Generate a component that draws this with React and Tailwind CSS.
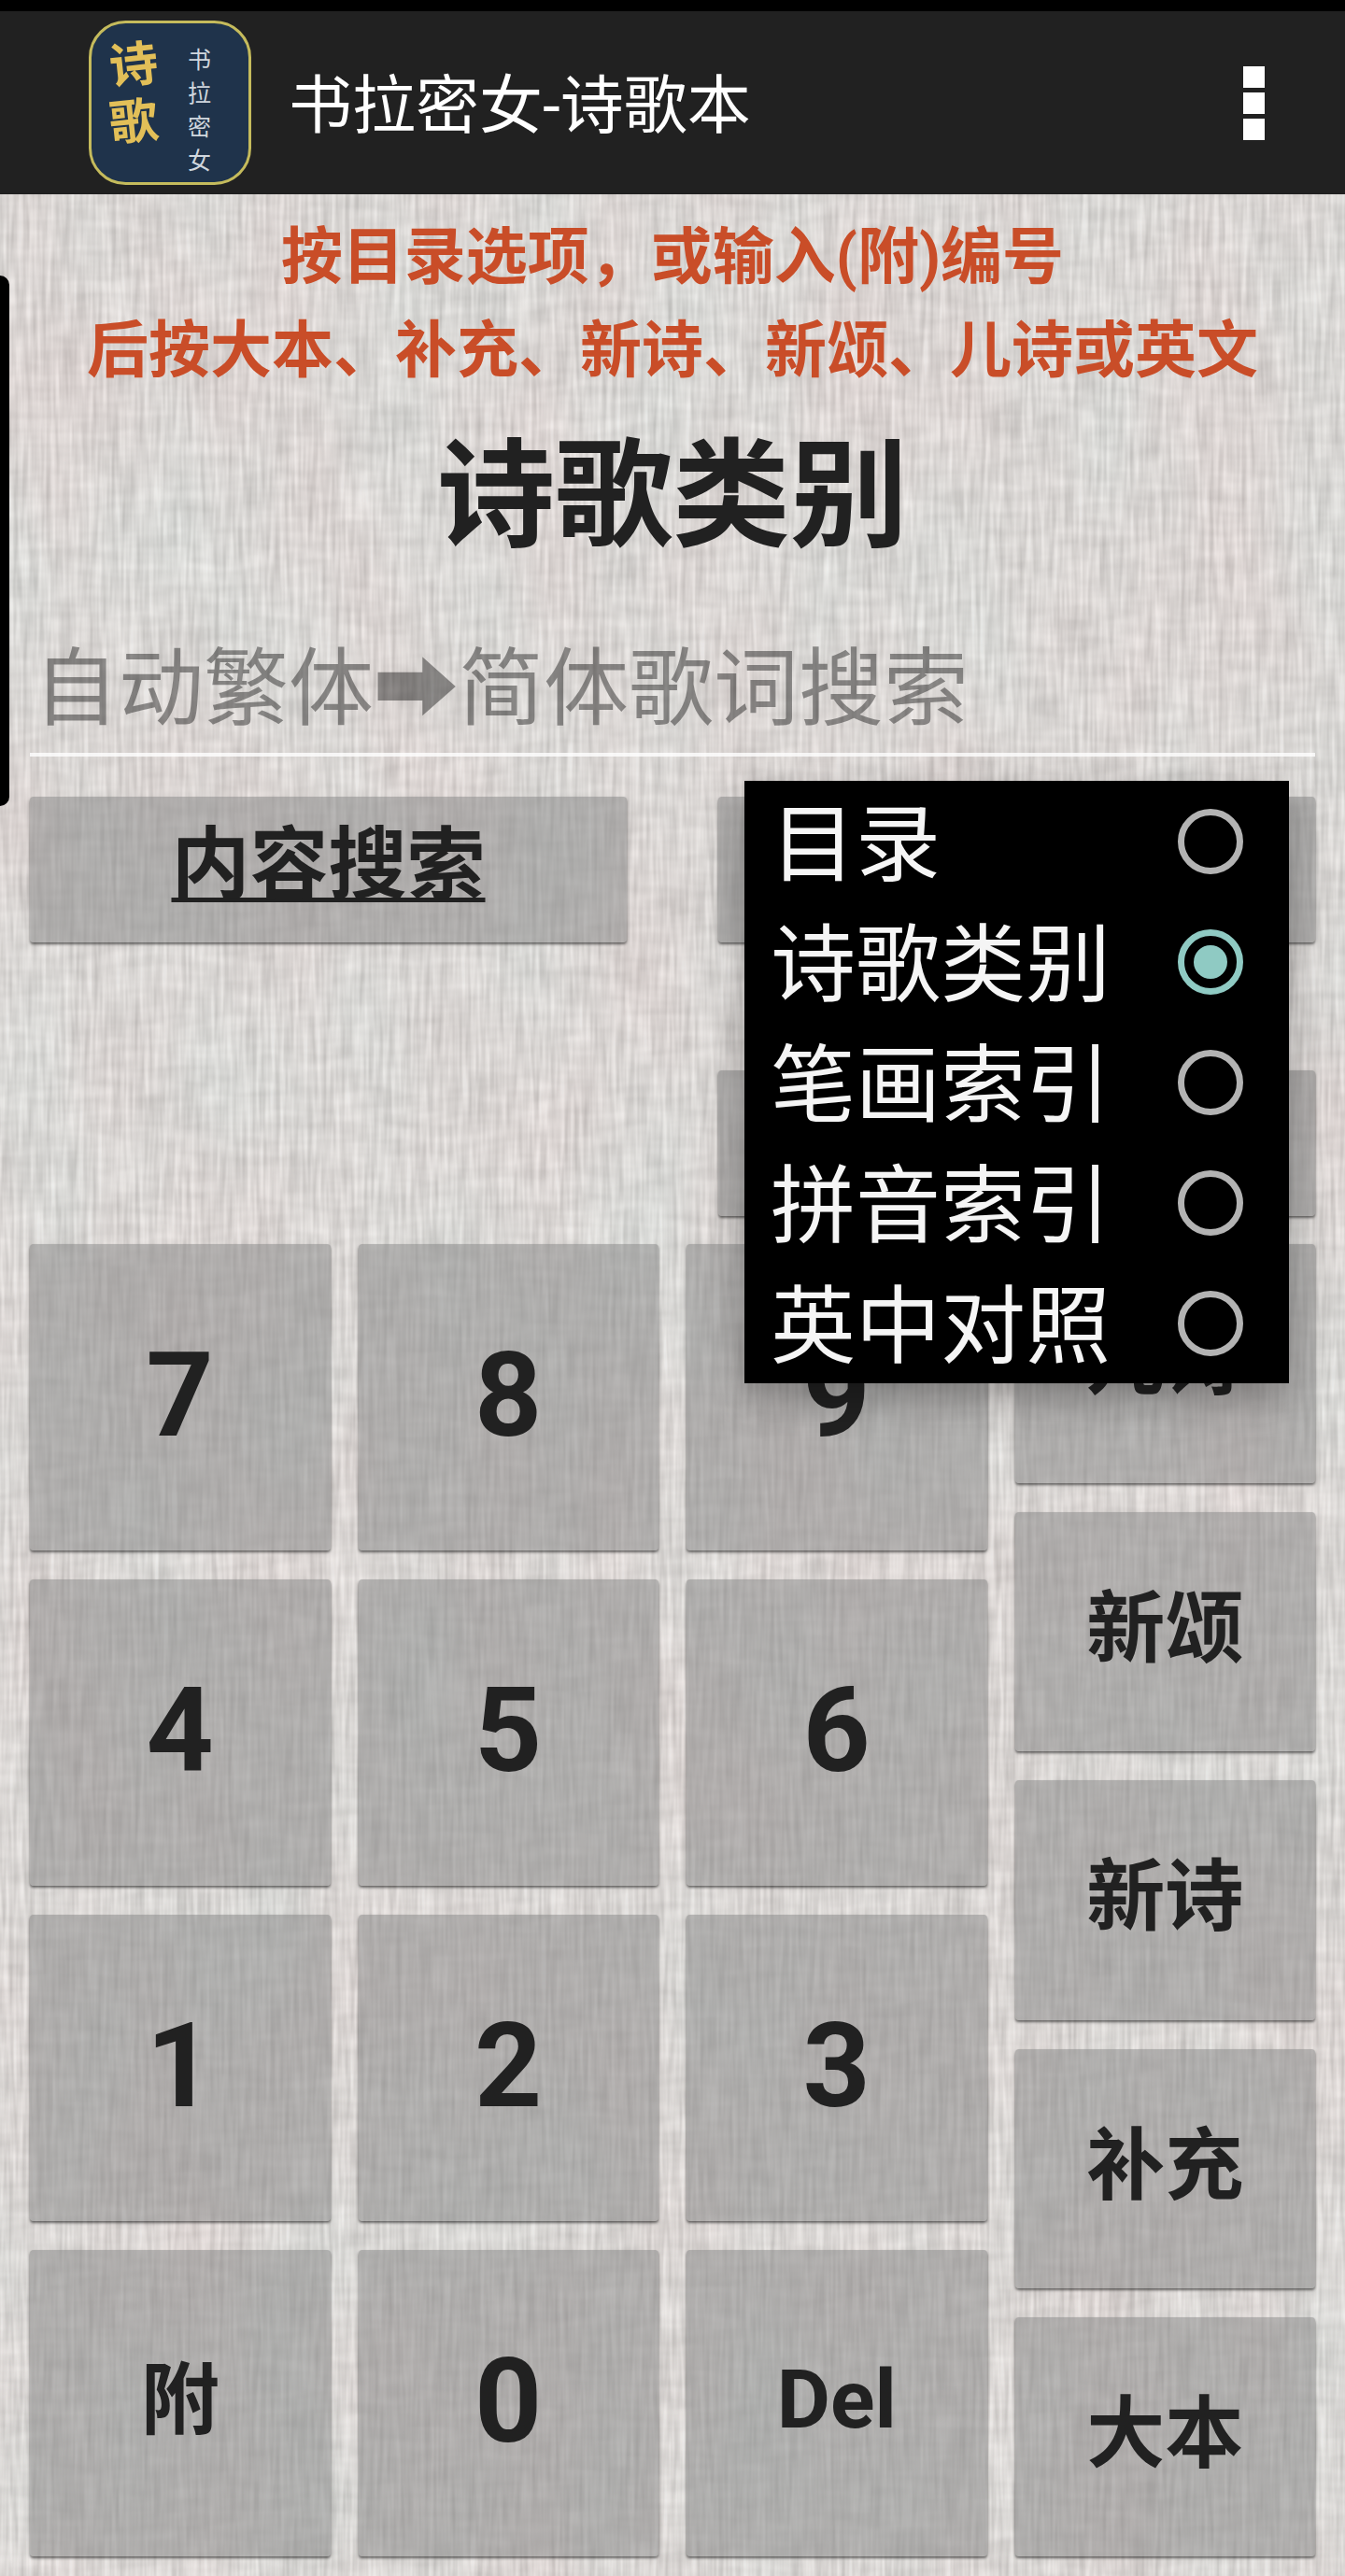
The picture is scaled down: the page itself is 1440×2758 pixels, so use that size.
import { useState } from 'react';

const CJK = "font-['Roboto','Noto_Sans_CJK_SC',sans-serif]";

const MENU = ['目录', '诗歌类别', '笔画索引', '拼音索引', '英中对照'];

const KEYS = [
  { label: '7', size: 'digit' },
  { label: '8', size: 'digit' },
  { label: '9', size: 'digit' },
  { label: '4', size: 'digit' },
  { label: '5', size: 'digit' },
  { label: '6', size: 'digit' },
  { label: '1', size: 'digit' },
  { label: '2', size: 'digit' },
  { label: '3', size: 'digit' },
  { label: '附', size: 'word' },
  { label: '0', size: 'digit' },
  { label: 'Del', size: 'latin' },
];

const BOOKS = ['儿诗', '新颂', '新诗', '补充', '大本'];

const SIZES = {
  digit: 'text-[126px] font-bold pb-1',
  word: 'text-[84px] font-bold pb-1',
  latin: 'text-[88px] font-bold pb-2',
};

function Linen() {
  return (
    <svg aria-hidden="true" className="absolute inset-0 h-full w-full">
      <filter id="linen" x="0" y="0" width="100%" height="100%" colorInterpolationFilters="sRGB">
        <feTurbulence type="fractalNoise" baseFrequency="0.2 0.014" numOctaves="2" seed="4" result="warp" />
        <feColorMatrix
          in="warp"
          values="0.6 0 0 0 0.55  0.6 0 0 0 0.537  0.6 0 0 0 0.528  0 0 0 0 1"
          result="warpTone"
        />
        <feTurbulence type="fractalNoise" baseFrequency="0.02 0.08" numOctaves="2" seed="9" result="weft" />
        <feColorMatrix
          in="weft"
          values="0.26 0 0 0 0.72  0.26 0 0 0 0.707  0.26 0 0 0 0.698  0 0 0 0 1"
          result="weftTone"
        />
        <feTurbulence type="fractalNoise" baseFrequency="0.008 0.004" numOctaves="2" seed="2" result="tint" />
        <feColorMatrix
          in="tint"
          values="0.06 0 0 0 0.83  -0.1 0 0 0 0.895  -0.09 0 0 0 0.88  0 0 0 0 1"
          result="tintTone"
        />
        <feComposite in="warpTone" in2="weftTone" operator="arithmetic" k2="0.5" k3="0.5" result="cloth" />
        <feComposite in="cloth" in2="tintTone" operator="arithmetic" k2="0.7" k3="0.3" />
      </filter>
      <rect width="100%" height="100%" filter="url(#linen)" />
    </svg>
  );
}

function Logo() {
  return (
    <svg viewBox="0 0 174 176" className="h-[176px] w-[174px] shrink-0" role="img" aria-label="诗歌 书拉密女">
      <rect x="1.5" y="1.5" width="171" height="173" rx="38" fill="#1f334b" stroke="#c5bb5c" strokeWidth="3" />
      <g fill="#e2bf58" fontFamily="'Noto Sans CJK SC', sans-serif" fontSize="52" fontWeight="700">
        <text x="22" y="66" transform="rotate(-6 48 46)">诗</text>
        <text x="22" y="127" transform="rotate(-6 48 107)">歌</text>
      </g>
      <g fill="#d0d7de" fontFamily="'Noto Sans CJK SC', sans-serif" fontSize="25">
        <text x="106" y="51">书</text>
        <text x="106" y="87">拉</text>
        <text x="106" y="123">密</text>
        <text x="106" y="159">女</text>
      </g>
    </svg>
  );
}

function Key({ children, className = '', ...rest }) {
  return (
    <button
      type="button"
      className={`flex items-center justify-center rounded-[4px] bg-[#838383]/50 leading-none text-[#212121] shadow-[0_2px_3px_rgba(0,0,0,0.55)] ${className}`}
      {...rest}
    >
      {children}
    </button>
  );
}

export default function App() {
  const [choice, setChoice] = useState('诗歌类别');
  return (
    <div className={`relative flex min-h-screen flex-col bg-[#dbd7d4] ${CJK}`}>
      <Linen />
      <header className="relative flex items-center border-t-[12px] border-black bg-[#212121] py-[10px] pr-[86px] pl-[95px]">
        <Logo />
        <h1 className="ml-10 flex-1 pt-2 text-[68px] leading-[96px] text-white">书拉密女-诗歌本</h1>
        <button type="button" aria-label="更多选项" className="flex flex-col gap-[5px]">
          <span className="size-[23px] bg-white" />
          <span className="size-[23px] bg-white" />
          <span className="size-[23px] bg-white" />
        </button>
      </header>

      <div aria-hidden="true" className="absolute top-[295px] left-0 h-[568px] w-[10px] rounded-r-[10px] bg-black" />

      <main className="relative flex flex-1 flex-col px-8 pb-[22px]">
        <p className="pt-[18px] text-center text-[66px] leading-[100px] font-bold text-[#c94d28]">
          按目录选项，或输入(附)编号
          <br />
          后按大本、补充、新诗、新颂、儿诗或英文
        </p>
        <h2 className="mt-4 text-center text-[126px] leading-[180px] font-bold text-[#212121]">诗歌类别</h2>
        <input
          type="text"
          aria-label="歌词搜索"
          placeholder="自动繁体➡简体歌词搜索"
          className="mt-10 h-[148px] w-full border-b-4 border-white/80 bg-transparent pt-2 pl-1 text-[91px] outline-none placeholder:text-black/40"
        />

        <div className="relative mt-[43px]">
          <div className="grid grid-cols-2 gap-x-[98px]">
            <Key className="h-[156px] pb-2 text-[84px] font-bold">
              <span className="underline decoration-[5px] underline-offset-[6px] [text-decoration-skip-ink:none]">内容搜索</span>
            </Key>
            <Key className="h-[156px]" aria-label="目录选项" />
            <Key className="col-start-2 mt-[137px] h-[156px]" aria-label="英文" />
          </div>

          <div
            role="radiogroup"
            aria-label="目录类型"
            className="absolute -top-[17px] right-[28px] z-10 w-[583px] bg-black shadow-[0_16px_40px_rgba(0,0,0,0.3)]"
          >
            {MENU.map((item) => (
              <label key={item} className="flex h-[129px] items-center justify-between pr-[49px] pl-7">
                <span className="pt-2 text-[91px] leading-[120px] text-[#f5f5f5]">{item}</span>
                <input
                  type="radio"
                  name="index"
                  checked={choice === item}
                  onChange={() => setChoice(item)}
                  className="grid size-[70px] appearance-none place-items-center rounded-full border-[7px] border-[#b3b3b3] checked:border-[#8fcac3] checked:before:size-[36px] checked:before:rounded-full checked:before:bg-[#8fcac3] checked:before:content-['']"
                />
              </label>
            ))}
          </div>
        </div>

        <div className="mt-[30px] grid h-[1405px] grid-cols-4 gap-[30px]">
          <div className="col-span-3 grid grid-cols-3 grid-rows-4 gap-x-[30px] gap-y-[31px]">
            {KEYS.map((key) => (
              <Key key={key.label} className={SIZES[key.size]}>
                {key.label}
              </Key>
            ))}
          </div>
          <div className="grid grid-rows-5 gap-[31px]">
            {BOOKS.map((book) => (
              <Key key={book} className={SIZES.word}>
                {book}
              </Key>
            ))}
          </div>
        </div>
      </main>
    </div>
  );
}
